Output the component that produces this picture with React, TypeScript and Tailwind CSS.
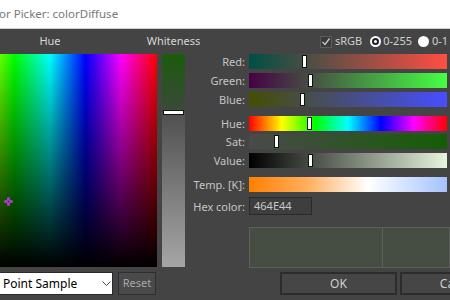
import React from "react";

const Handle = ({ left }: { left: number }) => (
  <div
    className="absolute top-[1px] bottom-[1px] w-[5px] bg-white border border-[#111]"
    style={{ left: left - 2 }}
  />
);

const Bar = ({ bg, handle }: { bg: string; handle?: number }) => (
  <div className="relative ml-[4px] w-[198px] shrink-0 h-[15px]" style={{ background: bg }}>
    {handle !== undefined && <Handle left={handle} />}
  </div>
);

const Row = ({ label, mt, children }: { label: string; mt: string; children: React.ReactNode }) => (
  <div className={`flex items-center ${mt}`}>
    <div className="w-[60px] shrink-0 text-right text-[11px] leading-none text-[#c4c4c4] whitespace-nowrap">{label}</div>
    {children}
  </div>
);

export default function App() {
  return (
    <div className="w-[450px] h-[300px] overflow-hidden bg-[#444444] font-['Noto_Sans',sans-serif]">
      <div className="h-[29px] bg-white border-b border-[#d0d0d0] flex items-center">
        <span className="ml-[-1px] text-[11.5px] text-[#777777] whitespace-nowrap">or Picker: colorDiffuse</span>
      </div>
      <div className="flex flex-col">
        <div className="flex h-[239px]">
          <div className="w-[157px] shrink-0 overflow-hidden">
            <div className="w-[214px] ml-[-57px] flex flex-col">
              <div className="h-[25px] flex items-center justify-center text-[11px] text-[#d6d6d6]">Hue</div>
              <div
                className="relative h-[213px]"
                style={{
                  background:
                    "linear-gradient(to bottom, rgba(0,0,0,0), #000), linear-gradient(to right, #f00, #ff0, #0f0, #0ff, #00f, #f0f, #f00)",
                }}
              >
                <svg className="absolute" style={{ left: 61, top: 143 }} width="9" height="9" viewBox="0 0 9 9">
                  <line x1="4.5" y1="1.5" x2="4.5" y2="7.5" stroke="#a53fc6" strokeWidth="3" strokeLinecap="round" />
                  <line x1="1.5" y1="4.5" x2="7.5" y2="4.5" stroke="#a53fc6" strokeWidth="3" strokeLinecap="round" />
                  <circle cx="4.5" cy="4.5" r="1" fill="#5e1f74" />
                </svg>
              </div>
            </div>
          </div>
          <div className="w-[23px] shrink-0 ml-[5px] flex flex-col">
            <div className="h-[25px] flex items-center justify-center whitespace-nowrap text-[11px] text-[#d6d6d6]">
              Whiteness
            </div>
            <div
              className="relative h-[213px]"
              style={{
                background:
                  "linear-gradient(to bottom, #1a5c0c 0%, #3a4a38 26%, #505050 28%, #a6a6a6 100%)",
              }}
            >
              <div className="absolute left-[1px] right-[1px] top-[56px] h-[5px] bg-white border border-[#111]" />
            </div>
          </div>
          <div className="flex-1 flex flex-col">
            <div className="h-[25px] flex items-center pl-[135px] text-[11px] text-[#d0d0d0] whitespace-nowrap">
              <div className="w-[12px] h-[12px] shrink-0 border border-[#5c5c5c] bg-[#3a3a3a] flex items-center justify-center">
                <svg width="10" height="10" viewBox="0 0 10 10">
                  <path d="M1.5 5 L4 7.5 L8.5 1.5" stroke="#c8c8c8" strokeWidth="1.3" fill="none" />
                </svg>
              </div>
              <span className="ml-[3px]">sRGB</span>
              <div className="ml-[8px] w-[11px] h-[11px] shrink-0 rounded-full bg-white flex items-center justify-center">
                <div className="w-[7px] h-[7px] rounded-full bg-[#222] flex items-center justify-center">
                  <div className="w-[3px] h-[3px] rounded-full bg-white" />
                </div>
              </div>
              <span className="ml-[2px]">0-255</span>
              <div className="ml-[6px] w-[11px] h-[11px] shrink-0 rounded-full bg-white" />
              <span className="ml-[3px]">0-1</span>
            </div>
            <Row label="Red:" mt="mt-0">
              <Bar bg="linear-gradient(to right, #004E44, #FF4E44)" handle={55} />
            </Row>
            <Row label="Green:" mt="mt-[4px]">
              <Bar bg="linear-gradient(to right, #460044, #46FF44)" handle={61} />
            </Row>
            <Row label="Blue:" mt="mt-[4px]">
              <Bar bg="linear-gradient(to right, #464E00, #464EFF)" handle={53} />
            </Row>
            <Row label="Hue:" mt="mt-[9px]">
              <Bar bg="linear-gradient(to right, #f00, #ff0, #0f0, #0ff, #00f, #f0f, #f00)" handle={60} />
            </Row>
            <Row label="Sat:" mt="mt-[3px]">
              <Bar bg="linear-gradient(to right, #4a4a4a, #155d05)" handle={27} />
            </Row>
            <Row label="Value:" mt="mt-[4px]">
              <Bar bg="linear-gradient(to right, #000, #e6f5de)" handle={61} />
            </Row>
            <Row label="Temp. [K]:" mt="mt-[9px]">
              <Bar bg="linear-gradient(to right, #ff8000, #ffb060 30%, #ffffff 60%, #a4c2ff 100%)" />
            </Row>
            <Row label="Hex color:" mt="mt-[5px]">
              <div className="ml-[4px] w-[63px] shrink-0 h-[18px] bg-[#3e3e3e] border border-[#2a2a2a] flex items-center pl-[4px] text-[11px] text-[#c8c8c8]">
                464E44
              </div>
            </Row>
            <div className="mt-[12px] ml-[64px] h-[41px] flex border border-[#5e5e5e]">
              <div className="w-[132px] shrink-0 h-full bg-[#464E44]" />
              <div className="w-[1px] shrink-0 h-full bg-[#5e5e5e]" />
              <div className="flex-1 h-full bg-[#464E44]" />
            </div>
          </div>
        </div>
        <div className="mt-[4px] h-[23px] flex">
          <div className="ml-[-1px] w-[114px] shrink-0 h-full bg-white border border-[#2a2a2a] flex items-center pl-[3px] text-[12px] text-black relative">
            Point Sample
            <svg className="absolute" style={{ left: 102, top: 8 }} width="9" height="6" viewBox="0 0 9 6">
              <path d="M0.5 0.5 L4.5 4.5 L8.5 0.5" stroke="#555" strokeWidth="1" fill="none" />
            </svg>
          </div>
          <div className="ml-[5px] w-[38px] shrink-0 h-full bg-[#4a4a4a] border border-[#2e2e2e] flex items-center justify-center text-[11px] text-[#a8a8a8]">
            Reset
          </div>
          <div className="ml-[124px] w-[117px] shrink-0 h-full bg-[#464646] border-2 border-[#2c2c2c] flex items-center justify-center text-[12px] text-[#d0d0d0]">
            OK
          </div>
          <div className="ml-[3px] w-[117px] shrink-0 h-full bg-[#464646] border-2 border-[#2c2c2c] flex items-center justify-center text-[12px] text-[#d0d0d0]">
            Cancel
          </div>
        </div>
      </div>
    </div>
  );
}
